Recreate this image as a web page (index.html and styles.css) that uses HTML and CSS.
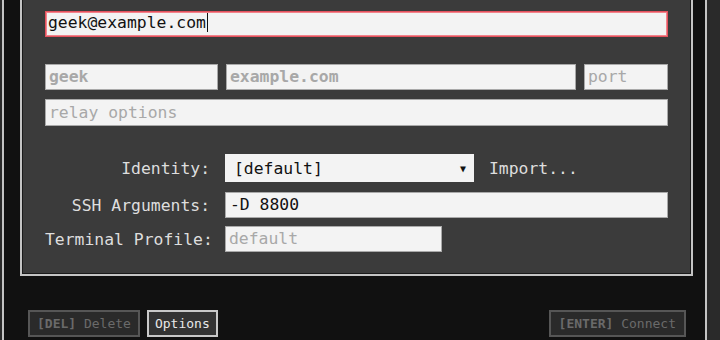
FILE: index.html
```html
<!DOCTYPE html>
<html lang="en">
<head>
  <meta charset="UTF-8">
  <title>New Connection</title>
  <link rel="stylesheet" href="styles.css">
</head>
<body>

  <div class="screen">

    <!-- Connection dialog -->
    <div class="dialog">
      <div class="panel">
        <div class="field email">geek@example.com<span class="caret"></span></div>

        <div class="host-row">
          <div class="field user placeholder strong">geek</div>
          <div class="field host placeholder strong">example.com</div>
          <div class="field port placeholder">port</div>
        </div>
        <div class="field relay placeholder">relay options</div>

        <div class="opt-row identity-row">
          <label class="opt-label">Identity:</label>
          <div class="select">
            <span>[default]</span>
            <span class="arrow">&#9660;</span>
          </div>
          <span class="import">Import...</span>
        </div>
        <div class="opt-row ssh-row">
          <label class="opt-label">SSH Arguments:</label>
          <div class="field args">-D 8800</div>
        </div>
        <div class="opt-row profile-row">
          <label class="opt-label">Terminal Profile:</label>
          <div class="field profile placeholder">default</div>
        </div>
      </div>
    </div>

    <!-- Bottom buttons -->
    <div class="actions">
      <button class="btn disabled"><b>[DEL]</b> Delete</button>
      <button class="btn selected">Options</button>
      <button class="btn disabled connect"><b>[ENTER]</b> Connect</button>
    </div>

  </div>

</body>
</html>
```

FILE: styles.css
```css
body {
  margin: 0;
  padding: 0;
  background-color: #2a2a2a;
  font-family: 'DejaVu Sans Mono', monospace;
  height: 340px;
  overflow: hidden;
}

.screen {
  box-sizing: border-box;
  margin-left: 2px;
  width: 705px;
  height: 340px;
  padding: 0 12px 0 16px;
  background: #111111;
  border-left: 2px solid #c4c4c4;
  border-right: 2px solid #c4c4c4;
}

.dialog {
  border: 2px solid #c4c4c4;
  border-top: none;
}

.panel {
  background: #3b3b3b;
  border: 1px solid #1a1a1a;
  border-top: none;
  padding: 11px 22px 21px 22px;
  font-size: 16.4px;
}

.field {
  box-sizing: border-box;
  height: 26px;
  line-height: 24px;
  padding: 0 3px;
  background: #f3f3f3;
  border: 1px solid #a9a9a9;
  color: #111111;
  white-space: nowrap;
}

.field.placeholder {
  color: #a8a8a8;
}

.field.strong {
  font-weight: bold;
}

.email {
  padding: 0 2px;
  line-height: 22px;
  border: 1px solid #e4515d;
  box-shadow: inset 0 0 0 1px #f1848c;
}

.caret {
  display: inline-block;
  width: 1px;
  height: 19px;
  margin-left: 1px;
  vertical-align: -4px;
  background: #111111;
}

.host-row {
  display: flex;
  gap: 8px;
  margin-top: 27px;
}

.user {
  width: 173px;
}

.host {
  flex: 1;
}

.port {
  width: 84px;
}

.relay {
  margin-top: 9px;
  height: 27px;
  line-height: 25px;
}

.opt-row {
  display: flex;
  align-items: center;
}

.identity-row {
  margin-top: 28px;
}

.ssh-row {
  margin-top: 10px;
}

.profile-row {
  margin-top: 8px;
}

.opt-label {
  width: 165px;
  margin-right: 15px;
  text-align: right;
  color: #dedede;
  white-space: nowrap;
}

.select {
  box-sizing: border-box;
  display: flex;
  justify-content: space-between;
  align-items: center;
  width: 249px;
  height: 28px;
  padding: 0 8px 0 9px;
  background: #f3f3f3;
  color: #111111;
}

.select .arrow {
  font-size: 10px;
}

.import {
  margin-left: 15px;
  color: #dedede;
}

.args {
  flex: 1;
  padding: 0 4px;
}

.profile {
  width: 217px;
}

.actions {
  display: flex;
  gap: 7px;
  margin: 34px 7px 0 8px;
}

.btn {
  box-sizing: border-box;
  height: 27px;
  padding: 0 7px;
  font-family: 'DejaVu Sans Mono', monospace;
  font-size: 13px;
  border: 2px solid #565656;
  background: #2a2a2a;
  color: #6a6a6a;
}

.btn b {
  font-weight: bold;
}

.btn.selected {
  padding: 0 6px;
  border-color: #c8c8c8;
  background: #333333;
  color: #e8e8e8;
}

.btn.connect {
  margin-left: auto;
  padding: 0 8px;
}
```
